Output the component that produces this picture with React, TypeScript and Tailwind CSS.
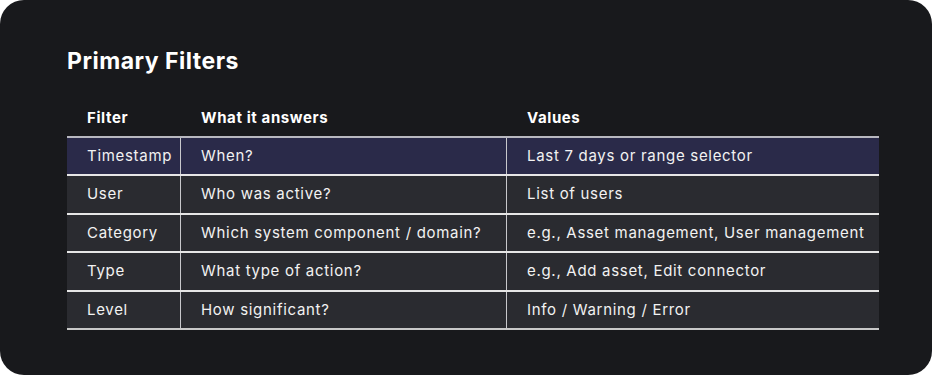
const rows = [
  { filter: 'Timestamp', question: 'When?', values: 'Last 7 days or range selector', active: true },
  { filter: 'User', question: 'Who was active?', values: 'List of users' },
  { filter: 'Category', question: 'Which system component / domain?', values: 'e.g., Asset management, User management' },
  { filter: 'Type', question: 'What type of action?', values: 'e.g., Add asset, Edit connector' },
  { filter: 'Level', question: 'How significant?', values: 'Info / Warning / Error' },
];

const Row = ({ filter, question, values, active }: { filter: string; question: string; values: string; active?: boolean }) => {
  return (
    <div
      className={`grid grid-cols-[114px_326px_372px] h-[38.4px] border-t-2 ${
        active ? 'bg-[#2a2a49] border-[#b8b8c0]' : 'bg-[#2a2b30] border-[#e6e6e6]'
      }`}
    >
      <div className="flex items-center pl-5 border-r border-[#c8c8cc]">{filter}</div>
      <div className="flex items-center pl-5 border-r border-[#c8c8cc]">{question}</div>
      <div className="flex items-center pl-5 whitespace-nowrap">{values}</div>
    </div>
  );
};

const App = () => {
  return (
    <div className="w-[932px] h-[376px] bg-white">
      <div
        className="w-[932px] h-[375px] bg-[#18191c] rounded-[24px] pl-[67px] pt-[46px] text-[#f2f2f2]"
        style={{ fontFamily: 'Inter, "Noto Sans", sans-serif' }}
      >
        <h1 className="text-[23px] font-bold leading-[30px] tracking-[0.5px] text-white">Primary Filters</h1>
        <div className="w-[812px] mt-[24px] text-[15px] tracking-[0.7px]">
          <div className="grid grid-cols-[114px_326px_372px] h-[36px] items-center font-bold text-white tracking-[0.6px]">
            <div className="pl-5">Filter</div>
            <div className="pl-5">What it answers</div>
            <div className="pl-5">Values</div>
          </div>
          {rows.map((r) => (
            <Row key={r.filter} {...r} />
          ))}
          <div className="h-[2px] bg-[#c8c8c8]" />
        </div>
      </div>
    </div>
  );
};

export default App;
